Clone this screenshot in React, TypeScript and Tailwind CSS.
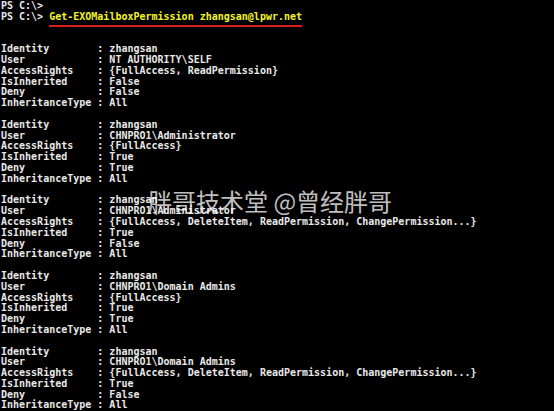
import React from 'react';

type Entry = {
  user: string;
  rights: string;
  inherited: string;
  deny: string;
};

const entries: Entry[] = [
  { user: 'NT AUTHORITY\\SELF', rights: '{FullAccess, ReadPermission}', inherited: 'False', deny: 'False' },
  { user: 'CHNPRO1\\Administrator', rights: '{FullAccess}', inherited: 'True', deny: 'True' },
  {
    user: 'CHNPRO1\\Administrator',
    rights: '{FullAccess, DeleteItem, ReadPermission, ChangePermission...}',
    inherited: 'True',
    deny: 'False',
  },
  { user: 'CHNPRO1\\Domain Admins', rights: '{FullAccess}', inherited: 'True', deny: 'True' },
  {
    user: 'CHNPRO1\\Domain Admins',
    rights: '{FullAccess, DeleteItem, ReadPermission, ChangePermission...}',
    inherited: 'True',
    deny: 'False',
  },
];

const Line: React.FC<{ children?: React.ReactNode }> = ({ children }) => (
  <div className="h-[10.8px] leading-[10.8px] whitespace-pre">{children ?? ' '}</div>
);

const Field: React.FC<{ label: string; value: string }> = ({ label, value }) => (
  <Line>{`${label.padEnd(15, ' ')} : ${value}`}</Line>
);

const App: React.FC = () => {
  return (
    <div className="relative w-[554px] h-[411px] overflow-hidden bg-black">
      <div className="pl-px pt-px text-[10px] font-bold text-[#e8e8e8] font-['DejaVu_Sans_Mono','Liberation_Mono',monospace]">
        <Line>{'PS C:\\>'}</Line>
        <Line>
          {'PS C:\\> '}
          <span className="text-[#f4f42a] border-b-2 border-[#d81e1e] pb-[3px]">
            Get-EXOMailboxPermission zhangsan@lpwr.net
          </span>
        </Line>
        <Line />
        <Line />
        {entries.map((e, i) => (
          <div key={i}>
            <Field label="Identity" value="zhangsan" />
            <Field label="User" value={e.user} />
            <Field label="AccessRights" value={e.rights} />
            <Field label="IsInherited" value={e.inherited} />
            <Field label="Deny" value={e.deny} />
            <Field label="InheritanceType" value="All" />
            <Line />
          </div>
        ))}
      </div>

      {/* watermark */}
      <div className="absolute left-[148px] top-[189px] text-[24px] leading-none whitespace-nowrap text-white/75 font-['Noto_Sans_CJK_SC','Noto_Sans',sans-serif]">
        胖哥技术堂 @曾经胖哥
      </div>
    </div>
  );
};

export default App;
